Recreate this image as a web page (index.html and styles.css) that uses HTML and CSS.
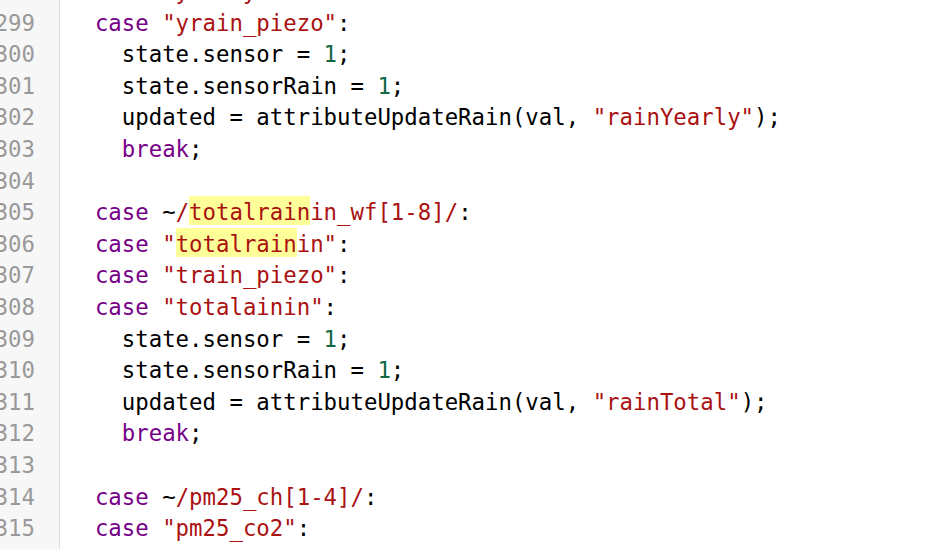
FILE: index.html
```html
<!DOCTYPE html>
<html>
<head>
<meta charset="utf-8">
<link rel="stylesheet" href="styles.css">
</head>
<body>
<div class="editor">
  <div class="gutter">
    <div class="lines">
      <div class="ln">298</div>
      <div class="ln">299</div>
      <div class="ln">300</div>
      <div class="ln">301</div>
      <div class="ln">302</div>
      <div class="ln">303</div>
      <div class="ln">304</div>
      <div class="ln">305</div>
      <div class="ln">306</div>
      <div class="ln">307</div>
      <div class="ln">308</div>
      <div class="ln">309</div>
      <div class="ln">310</div>
      <div class="ln">311</div>
      <div class="ln">312</div>
      <div class="ln">313</div>
      <div class="ln">314</div>
      <div class="ln">315</div>
    </div>
  </div>
  <div class="code">
    <div class="lines">
<pre class="cl">  <span class="kw">case</span> <span class="str">"yearlyrainin"</span>:</pre>
<pre class="cl">  <span class="kw">case</span> <span class="str">"yrain_piezo"</span>:</pre>
<pre class="cl">    state.sensor = <span class="num">1</span>;</pre>
<pre class="cl">    state.sensorRain = <span class="num">1</span>;</pre>
<pre class="cl">    updated = attributeUpdateRain(val, <span class="str">"rainYearly"</span>);</pre>
<pre class="cl">    <span class="kw">break</span>;</pre>
<pre class="cl"> </pre>
<pre class="cl">  <span class="kw">case</span> ~<span class="str">/<span class="hl">totalrain</span>in_wf[1-8]/</span>:</pre>
<pre class="cl">  <span class="kw">case</span> <span class="str">"<span class="hl">totalrain</span>in"</span>:</pre>
<pre class="cl">  <span class="kw">case</span> <span class="str">"train_piezo"</span>:</pre>
<pre class="cl">  <span class="kw">case</span> <span class="str">"totalainin"</span>:</pre>
<pre class="cl">    state.sensor = <span class="num">1</span>;</pre>
<pre class="cl">    state.sensorRain = <span class="num">1</span>;</pre>
<pre class="cl">    updated = attributeUpdateRain(val, <span class="str">"rainTotal"</span>);</pre>
<pre class="cl">    <span class="kw">break</span>;</pre>
<pre class="cl"> </pre>
<pre class="cl">  <span class="kw">case</span> ~<span class="str">/pm25_ch[1-4]/</span>:</pre>
<pre class="cl">  <span class="kw">case</span> <span class="str">"pm25_co2"</span>:</pre>
    </div>
  </div>
</div>
</body>
</html>
```

FILE: styles.css
```css
html, body {
  margin: 0;
  padding: 0;
  background: #ffffff;
}

.editor {
  display: flex;
  height: 100vh;
  overflow: hidden;
  font-family: "DejaVu Sans Mono", "Liberation Mono", monospace;
  font-size: 22.35px;
  line-height: 31.6px;
}

.gutter {
  width: 59px;
  flex: 0 0 59px;
  background: #f7f7f7;
  border-right: 1px solid #dddddd;
}

.lines {
  margin-top: -24px;
}

.ln {
  display: flex;
  justify-content: flex-end;
  padding-right: 24px;
  height: 31.6px;
  color: #999999;
  white-space: nowrap;
}

.code {
  flex: 1;
  padding-left: 8px;
  color: #000000;
}

.cl {
  margin: 0;
  height: 31.6px;
  font: inherit;
  white-space: pre;
}

.kw { color: #770088; }
.str { color: #aa1111; }
.num { color: #116644; }

.hl {
  background: #ffff99;
  padding-top: 3px;
}
```
